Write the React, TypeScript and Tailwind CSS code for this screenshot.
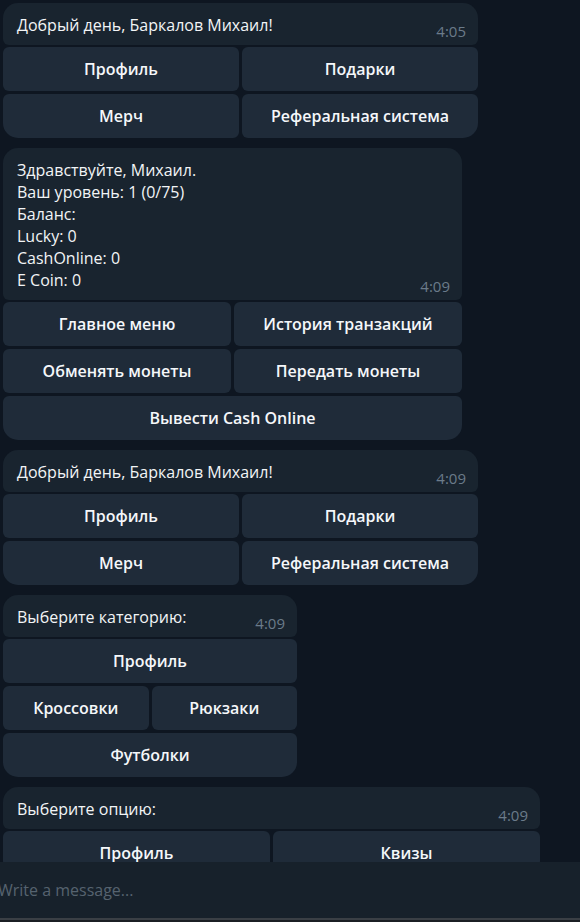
import React from "react";

type Row = string[];

type Msg = {
  lines: string[];
  time: string;
  width: string;
  rows: Row[];
};

const messages: Msg[] = [
  {
    lines: ["Добрый день, Баркалов Михаил!"],
    time: "4:05",
    width: "w-[475px]",
    rows: [
      ["Профиль", "Подарки"],
      ["Мерч", "Реферальная система"],
    ],
  },
  {
    lines: [
      "Здравствуйте, Михаил.",
      "Ваш уровень: 1 (0/75)",
      "Баланс:",
      "Lucky: 0",
      "CashOnline: 0",
      "E Coin: 0",
    ],
    time: "4:09",
    width: "w-[459px]",
    rows: [
      ["Главное меню", "История транзакций"],
      ["Обменять монеты", "Передать монеты"],
      ["Вывести Cash Online"],
    ],
  },
  {
    lines: ["Добрый день, Баркалов Михаил!"],
    time: "4:09",
    width: "w-[475px]",
    rows: [
      ["Профиль", "Подарки"],
      ["Мерч", "Реферальная система"],
    ],
  },
  {
    lines: ["Выберите категорию:"],
    time: "4:09",
    width: "w-[294px]",
    rows: [["Профиль"], ["Кроссовки", "Рюкзаки"], ["Футболки"]],
  },
  {
    lines: ["Выберите опцию:"],
    time: "4:09",
    width: "w-[537px]",
    rows: [["Профиль", "Квизы"]],
  },
];

function KeyButton({
  label,
  first,
  last,
  lastRow,
}: {
  label: string;
  first: boolean;
  last: boolean;
  lastRow: boolean;
}) {
  const radius = lastRow
    ? first && last
      ? "rounded-t-[6px] rounded-b-[15px]"
      : first
      ? "rounded-t-[6px] rounded-br-[6px] rounded-bl-[15px]"
      : "rounded-t-[6px] rounded-bl-[6px] rounded-br-[15px]"
    : "rounded-[6px]";
  return (
    <div
      className={`flex-1 h-[44px] flex items-center justify-center bg-[#1f2b39] text-[#f5f7fa] text-[16px] font-semibold ${radius}`}
    >
      {label}
    </div>
  );
}

function Message({ msg }: { msg: Msg }) {
  return (
    <div className={`flex flex-col gap-[2px] ${msg.width}`}>
      <div className="flex items-end justify-between rounded-t-[15px] rounded-b-[6px] bg-[#19242f] pl-[14px] pr-[12px] pt-[11px] pb-[9px]">
        <div className="flex flex-col text-[16px] leading-[22px] text-[#f2f4f6]">
          {msg.lines.map((l, i) => (
            <span key={i}>{l}</span>
          ))}
        </div>
        <span className="text-[15px] leading-[16px] text-[#6b7b8a] translate-y-[3px]">
          {msg.time}
        </span>
      </div>
      <div className="flex flex-col gap-[3px]">
        {msg.rows.map((row, ri) => (
          <div key={ri} className="flex gap-[3px]">
            {row.map((b, bi) => (
              <KeyButton
                key={bi}
                label={b}
                first={bi === 0}
                last={bi === row.length - 1}
                lastRow={ri === msg.rows.length - 1}
              />
            ))}
          </div>
        ))}
      </div>
    </div>
  );
}

export default function App() {
  return (
    <div
      className="w-[580px] h-[922px] overflow-hidden flex flex-col bg-[#0e1621]"
      style={{ fontFamily: '"Open Sans", "Noto Sans", sans-serif' }}
    >
      <div className="h-[862px] overflow-hidden flex flex-col gap-[10px] pt-[3px] pl-[3px]">
        {messages.map((m, i) => (
          <Message key={i} msg={m} />
        ))}
      </div>
      <div className="h-[56px] flex items-center bg-[#17212b]">
        <span className="ml-[-2px] text-[16px] text-[#56636f]">Write a message...</span>
      </div>
      <div className="h-[2px] bg-[#3a3f45]" />
      <div className="flex-1 bg-[#1b1f24]" />
    </div>
  );
}
